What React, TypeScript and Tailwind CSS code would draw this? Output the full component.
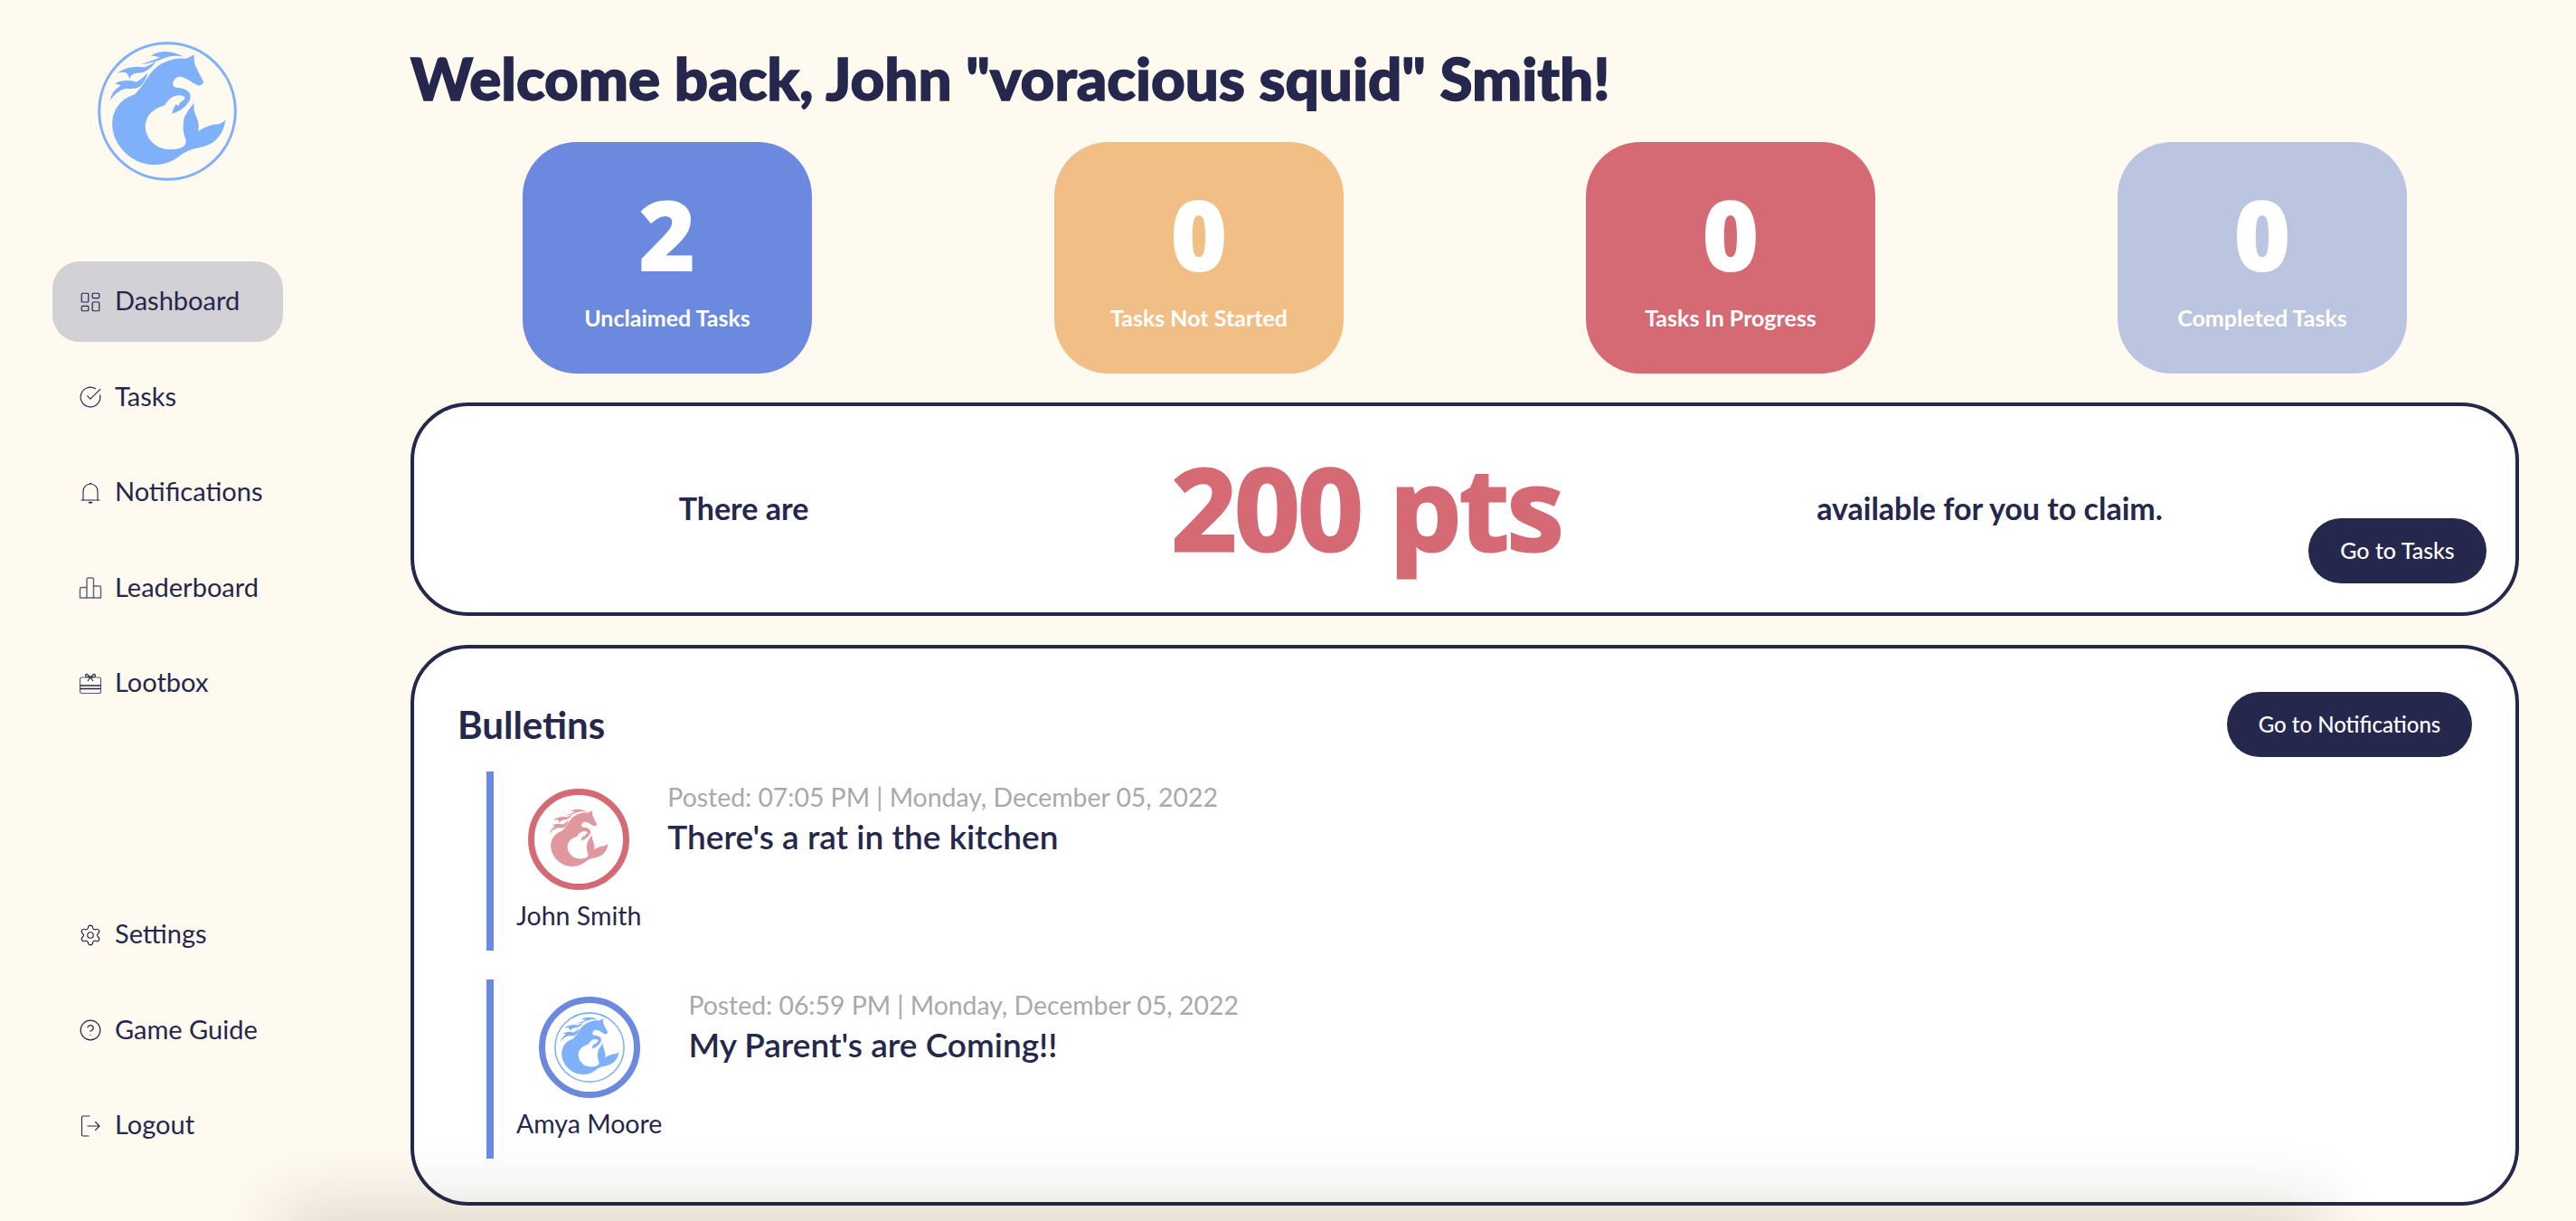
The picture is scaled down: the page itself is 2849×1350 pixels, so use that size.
import React from "react";
import { LayoutDashboard, CircleCheckBig, Settings, CircleHelp } from "lucide-react";

const BODY =
  "M372 97 Q370 112 374 128 Q388 160 402 184 Q400 196 386 197 Q368 190 352 178 Q335 168 322 168 Q305 175 303 190 Q303 203 318 204 Q345 205 358 222 Q366 240 345 262 Q325 282 300 288 Q304 270 312 258 L322 262 L326 252 Q340 245 342 235 Q330 225 312 230 Q290 235 277 260 Q250 268 232 285 Q212 305 214 335 Q218 370 250 392 Q285 412 330 398 Q348 390 345 372 Q330 340 340 300 Q352 275 372 253 Q368 275 378 295 Q390 320 385 345 Q420 322 450 322 Q465 318 473 306 Q470 345 440 375 Q420 392 385 398 Q345 405 320 428 Q290 452 240 453 Q180 450 140 405 Q105 365 107 315 Q110 270 145 242 Q165 230 180 225 Q200 205 225 165 Q250 128 290 116 Q320 106 345 110 Q360 105 372 97Z";
const MANE = [
  "M232 100 Q270 80 310 92 Q325 96 337 103 Q305 97 275 108 Q240 124 200 128 Q235 118 262 106 Q250 102 232 100Z",
  "M122 158 Q160 130 210 138 Q228 133 250 118 Q232 145 205 155 Q185 155 175 160 Q165 165 163 177 Q160 160 150 155 Q135 152 122 158Z",
  "M116 190 Q145 175 185 185 Q205 175 222 155 Q215 185 195 202 Q180 210 150 207 Q120 215 100 245 Q105 215 135 197 Q125 192 116 190Z",
];

function Logo({ color, ring, className }: { color: string; ring?: string; className: string }) {
  return (
    <svg viewBox="60 55 450 450" className={className}>
      {ring && <circle cx="285" cy="280" r="220" fill="none" stroke={ring} strokeWidth="9" />}
      <path d={BODY} fill={color} />
      {MANE.map((d) => (
        <path key={d} d={d} fill={color} />
      ))}
    </svg>
  );
}

const iconCls = "w-[26px] h-[26px] shrink-0 text-[#25274d]";

function BellIcon() {
  return (
    <svg viewBox="0 0 26 26" fill="none" stroke="currentColor" strokeWidth="1.1" strokeLinecap="round" className={iconCls}>
      <path d="M5 21 V11 a8 8 0 0 1 16 0 V21" />
      <path d="M3 21 H23" />
      <path d="M12.2 2.6 a1 1 0 0 1 1.6 0" />
      <path d="M11.5 23.6 h3" strokeWidth="1.6" />
    </svg>
  );
}
function BoardIcon() {
  return (
    <svg viewBox="0 0 26 26" fill="none" stroke="currentColor" strokeOpacity="0.7" strokeWidth="1.5" strokeLinejoin="round" className={iconCls}>
      <path d="M1.500 24 V14 a1.500 1.500 0 0 1 1.500 -1.500 H9 V3.500 a1.500 1.500 0 0 1 1.500 -1.500 H15 a1.500 1.500 0 0 1 1.500 1.500 V11 H23 a1.500 1.500 0 0 1 1.500 1.500 V24 Z" />
      <path d="M9 12.500 V24 M16.500 11 V24" />
    </svg>
  );
}
function LootIcon() {
  return (
    <svg viewBox="0 0 26 26" fill="none" stroke="currentColor" strokeWidth="1.2" strokeLinejoin="round" className={iconCls}>
      <rect x="1.500" y="6" width="23" height="17.500" rx="2" strokeOpacity="0.75" />
      <path d="M1.500 15 H24.500 M1.500 18.500 H24.500" strokeWidth="1.500" />
      <path d="M13 6 L9.500 2.500 a1.500 1.500 0 0 0 -1.500 2.500 L13 6 L18 5 a1.500 1.500 0 0 0 -1.500 -2.500 Z M13 6 L10 10 M13 6 L16 10" />
    </svg>
  );
}
function LogoutIcon() {
  return (
    <svg viewBox="0 0 26 26" fill="none" stroke="currentColor" strokeWidth="1.1" strokeLinecap="round" strokeLinejoin="round" className={iconCls}>
      <path d="M12 2 H5 a1.500 1.500 0 0 0 -1.500 1.500 V22.500 a1.500 1.500 0 0 0 1.500 1.500 H11" />
      <path d="M10 13 H23 M18.500 8.500 L23 13 L18.500 17.500" />
    </svg>
  );
}

function NavItem({ icon, label, active }: { icon: React.ReactNode; label: string; active?: boolean }) {
  return (
    <div
      className={`flex items-center gap-[14px] h-[89px] w-[255px] pl-[29px] rounded-[30px] text-[29px] text-[#25274d] ${
        active ? "bg-[#d2d1d6]" : ""
      }`}
    >
      {icon}
      <span className="-mt-[3px]">{label}</span>
    </div>
  );
}

function Stat({ value, label, color }: { value: string; label: string; color: string }) {
  return (
    <div className={`w-[320px] h-[256px] rounded-[60px] flex flex-col items-center text-white ${color}`}>
      <div className="mt-[27px] h-[150px] leading-[150px] text-[108px] font-extrabold font-['Open_Sans',sans-serif]">{value}</div>
      <div className="mt-[1px] text-[25px] font-bold leading-[32px]">{label}</div>
    </div>
  );
}

function Bulletin({
  avatar,
  ringColor,
  name,
  posted,
  title,
}: {
  avatar: React.ReactNode;
  ringColor: string;
  name: string;
  posted: string;
  title: string;
}) {
  return (
    <div className="flex h-[198px] border-l-[8px] border-[#6c89e0] pl-[25px]">
      <div className="flex flex-col items-center pt-[19px]">
        <div className={`w-[112px] h-[112px] rounded-full border-[7px] bg-white flex items-center justify-center ${ringColor}`}>
          {avatar}
        </div>
        <div className="mt-[10px] text-[28.500px] leading-[36px] text-[#25274d]">{name}</div>
      </div>
      <div className="ml-[29px] pt-[9px]">
        <div className="text-[28.400px] leading-[38px] text-[#a9a9a9]">{posted}</div>
        <div className="mt-[2px] text-[37px] leading-[46px] font-semibold text-[#25274d]">{title}</div>
      </div>
    </div>
  );
}

export default function App() {
  return (
    <div className="relative flex h-screen w-full overflow-hidden bg-[#fffaf0] font-['Lato','Noto_Sans',sans-serif]">
      <aside className="w-[454px] shrink-0 flex flex-col pl-[58px] pb-[61px]">
        <div className="pl-[50px] pt-[46px]">
          <Logo color="#7fb0fa" ring="#7fb0fa" className="w-[154px] h-[154px]" />
        </div>
        <nav className="mt-[89px] flex flex-col gap-[16.500px]">
          <NavItem active label="Dashboard" icon={<LayoutDashboard strokeWidth={1.1} className={iconCls} />} />
          <NavItem label="Tasks" icon={<CircleCheckBig strokeWidth={1.1} className={iconCls} />} />
          <NavItem label="Notifications" icon={<BellIcon />} />
          <NavItem label="Leaderboard" icon={<BoardIcon />} />
          <NavItem label="Lootbox" icon={<LootIcon />} />
        </nav>
        <div className="mt-auto flex flex-col gap-[16.500px]">
          <NavItem label="Settings" icon={<Settings strokeWidth={1.1} className={iconCls} />} />
          <NavItem label="Game Guide" icon={<CircleHelp strokeWidth={1.1} className={iconCls} />} />
          <NavItem label="Logout" icon={<LogoutIcon />} />
        </div>
      </aside>

      <main className="w-[2332px] shrink-0 flex flex-col">
        <h1 className="h-[157px] pt-[46px] text-[65.500px] leading-[80px] font-black text-[#25274d] [-webkit-text-stroke:1.5px_#25274d]">
          Welcome back, John "voracious squid" Smith!
        </h1>

        <div className="flex justify-between px-[124px]">
          <Stat value="2" label="Unclaimed Tasks" color="bg-[#6c89e0]" />
          <Stat value="0" label="Tasks Not Started" color="bg-[#f1bf85]" />
          <Stat value="0" label="Tasks In Progress" color="bg-[#d56a75]" />
          <Stat value="0" label="Completed Tasks" color="bg-[#bcc5e0]" />
        </div>

        <section className="mt-[32px] h-[236px] rounded-[64px] border-[4px] border-[#25274d] bg-white flex items-center pl-[20px]">
          <div className="w-[689px] -mt-[3px] text-center text-[34px] font-bold text-[#25274d]">There are</div>
          <div className="w-[689px] -mt-[6px] text-center text-[126px] leading-[150px] font-bold tracking-[-2px] text-[#d56a75] [-webkit-text-stroke:3px_#d56a75] font-['Open_Sans',sans-serif]">
            200 pts
          </div>
          <div className="w-[689px] -mt-[3px] text-center text-[34px] font-bold text-[#25274d]">available for you to claim.</div>
          <div className="self-end pb-[32px] pl-[8px]">
            <button className="w-[197px] h-[72px] rounded-full bg-[#25274d] text-white text-[25px] font-medium">Go to Tasks</button>
          </div>
        </section>

        <section className="mt-[32px] h-[620px] rounded-[64px] border-[4px] border-[#25274d] bg-white pt-[48px] px-[48px]">
          <div className="flex items-center justify-between h-[72px]">
            <h2 className="text-[42px] font-bold text-[#25274d]">Bulletins</h2>
            <button className="w-[271px] h-[72px] rounded-full bg-[#25274d] text-white text-[24px] font-medium">
              Go to Notifications
            </button>
          </div>
          <div className="mt-[16px] ml-[32px] flex flex-col gap-[32px]">
            <Bulletin
              ringColor="border-[#d56a75]"
              avatar={<Logo color="#e0979d" className="w-[78px] h-[78px]" />}
              name="John Smith"
              posted="Posted: 07:05 PM | Monday, December 05, 2022"
              title="There's a rat in the kitchen"
            />
            <Bulletin
              ringColor="border-[#6c89e0]"
              avatar={<Logo color="#7fb0fa" ring="#7fb0fa" className="w-[78px] h-[78px]" />}
              name="Amya Moore"
              posted="Posted: 06:59 PM | Monday, December 05, 2022"
              title="My Parent's are Coming!!"
            />
          </div>
        </section>
      </main>

      <div className="pointer-events-none absolute left-[340px] w-[2200px] top-[1358px] h-[40px] shadow-[0_0_70px_30px_rgba(40,30,0,0.14)]" />
    </div>
  );
}
